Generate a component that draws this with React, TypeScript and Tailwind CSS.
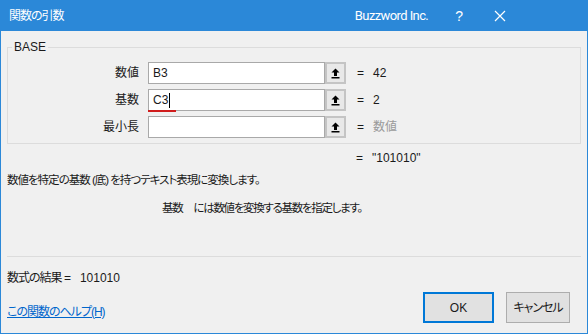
import React from "react";

const jp = "font-['Liberation_Sans','Noto_Sans_CJK_JP',sans-serif] [font-feature-settings:'palt']";
const tight = "tracking-[-1px]";

function RefButton() {
  return (
    <div className="flex h-[22px] w-[21px] items-center justify-center border-2 border-[#c4c4c4] bg-[#e8e8e8]">
      <svg width="9" height="11" viewBox="0 0 9 11">
        <path d="M4.5 0.5 L8.5 4.5 L6 4.5 L6 8 L3 8 L3 4.5 L0.5 4.5 Z" fill="#000" />
        <rect x="0.5" y="9" width="8" height="1.5" fill="#000" />
      </svg>
    </div>
  );
}

function ArgRow({
  label,
  value,
  result,
  dim,
  focused,
}: {
  label: string;
  value: string;
  result: string;
  dim?: boolean;
  focused?: boolean;
}) {
  return (
    <div className="flex h-[22px] items-center">
      <div className="w-[131px] text-right">{label}</div>
      <div className="relative ml-[9px] flex h-[22px] w-[177px] items-center border border-[#a9a9a9] bg-white pl-[4px]">
        <span>{value}</span>
        {focused && <span className="ml-[1px] h-[15px] w-[1px] bg-black" />}
        {focused && <span className="absolute bottom-[-2px] left-[-1px] h-[2px] w-[28px] bg-[#d01c1c]" />}
      </div>
      <RefButton />
      <span className="ml-[11px]">=</span>
      <span className={`ml-[9px] ${dim ? "text-[#9a9a9a]" : ""}`}>{result}</span>
    </div>
  );
}

export default function App() {
  return (
    <div className={`flex h-[334px] w-[588px] flex-col bg-[#2b88d8] text-[12px] leading-[16px] text-[#1a1a1a] ${jp}`}>
      <div className="flex h-[31px] items-center text-white">
        <span className={`ml-[9px] ${tight}`}>関数の引数</span>
        <span className="ml-auto font-['Roboto',sans-serif] text-[13px] tracking-[-0.6px]">Buzzword Inc.</span>
        <span className="ml-[27px] text-[14px]">?</span>
        <svg className="ml-[31px] mr-[82px]" width="12" height="12" viewBox="0 0 12 12">
          <path d="M1 1 L11 11 M11 1 L1 11" stroke="#fff" strokeWidth="1.2" />
        </svg>
      </div>

      <div className="mx-[1px] mb-[1px] flex flex-1 flex-col bg-[#f0f0f0] px-[6px]">
        <fieldset className="mt-[8px] border border-[#dcdcdc] px-0 pb-[5px] pt-[7px]">
          <legend className="ml-[4px] px-[2px] leading-[16px]">BASE</legend>
          <div className="flex flex-col gap-[5px]">
            <ArgRow label="数値" value="B3" result="42" />
            <ArgRow label="基数" value="C3" result="2" focused />
            <ArgRow label="最小長" value="" result="数値" dim />
          </div>
        </fieldset>

        <div className="mt-[6px] flex">
          <span className="ml-[349px]">=</span>
          <span className="ml-[9px]">"101010"</span>
        </div>

        <div className={`mt-[6px] text-[11.5px] ${tight}`}>数値を特定の基数 (底) を持つテキスト表現に変換します。</div>

        <div className={`mt-[12px] flex pl-[155px] text-[11.5px] tracking-[-1.3px]`}>
          <span>基数</span>
          <span className="ml-[11px]">には数値を変換する基数を指定します。</span>
        </div>

        <div className="mt-[40px] h-[1px] bg-[#dcdcdc]" />

        <div className="mt-[13px] flex">
          <span className={tight}>数式の結果 =</span>
          <span className="ml-[10px]">101010</span>
        </div>

        <div className="mt-[6px] flex items-start">
          <a href="#" className={`mt-[12px] text-[#0066cc] underline ${tight}`}>
            この関数のヘルプ(H)
          </a>
          <button className="ml-auto h-[31px] w-[71px] border-2 border-[#0078d7] bg-[#e1e1e1]">OK</button>
          <button className={`ml-[12px] mr-[11px] h-[31px] w-[64px] border border-[#adadad] bg-[#e1e1e1] ${tight}`}>
            キャンセル
          </button>
        </div>
      </div>
    </div>
  );
}
